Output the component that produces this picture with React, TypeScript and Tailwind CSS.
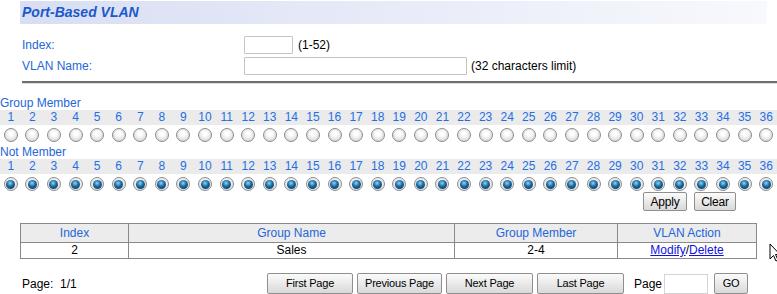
import React from 'react';

const ports = Array.from({ length: 36 }, (_, i) => i + 1);

const Radio = ({ checked }: { checked: boolean }) =>
  checked ? (
    <span className="w-[14px] h-[14px] rounded-full border border-[#8c8c8c] bg-[radial-gradient(circle_at_50%_40%,#ffffff,#d6d6d6)] flex items-center justify-center">
      <span className="w-[9px] h-[9px] rounded-full bg-[radial-gradient(circle_at_45%_35%,#8fd4f5,#16679e_45%,#082e52)]" />
    </span>
  ) : (
    <span className="w-[14px] h-[14px] rounded-full border border-[#8c8c8c] bg-[radial-gradient(circle_at_50%_40%,#ffffff_20%,#c9c9c9)]" />
  );

const PortGrid = ({ checked }: { checked: boolean }) => (
  <>
    <div className="grid grid-cols-36 h-[15px] bg-[#ebebeb] text-[#1f6fe5] leading-[15px]">
      {ports.map((p) => (
        <span key={p} className="text-center">{p}</span>
      ))}
    </div>
    <div className="grid grid-cols-36 h-[20px] items-center">
      {ports.map((p) => (
        <span key={p} className="flex justify-center">
          <Radio checked={checked} />
        </span>
      ))}
    </div>
  </>
);

const Btn = ({ children, w }: { children: React.ReactNode; w: string }) => (
  <button
    className={`${w} h-[21px] rounded-[2px] border border-[#8f8f8f] bg-gradient-to-b from-[#fbfbfb] to-[#d9d9d9] text-[11px] tracking-[-0.2px] text-black leading-none`}
  >
    {children}
  </button>
);

export default function App() {
  return (
    <div className="relative w-[777px] h-[294px] overflow-hidden bg-white font-['Liberation_Sans',Arial,sans-serif] text-[12px]">
      {/* Title bar */}
      <div className="mt-[1px] ml-[20px] w-[747px] h-[23px] bg-gradient-to-r from-[#d8def3] to-[#f8f9fd] pl-[2px] leading-[23px]">
        <span className="text-[14px] font-bold italic text-[#1b58cc]">Port-Based VLAN</span>
      </div>

      {/* Form */}
      <div className="mt-[12px] ml-[22px] flex flex-col gap-[3px] text-[#2566d8]">
        <div className="flex items-center h-[18px]">
          <span className="w-[222px]">Index:</span>
          <input className="w-[49px] h-[18px] border border-[#c4c4c4] rounded-[1px]" />
          <span className="ml-[5px] text-black">(1-52)</span>
        </div>
        <div className="flex items-center h-[18px]">
          <span className="w-[222px]">VLAN Name:</span>
          <input className="w-[223px] h-[18px] border border-[#c4c4c4] rounded-[1px]" />
          <span className="ml-[4px] text-black">(32 characters limit)</span>
        </div>
      </div>

      <div className="mt-[6px] ml-[22px] border-t-[2px] border-t-[#6f6f6f] border-b border-b-[#e0e0e0]" />

      {/* Ports */}
      <div className="mt-[12px] text-[#2566d8] leading-[14px] h-[14px]">Group Member</div>
      <PortGrid checked={false} />
      <div className="text-[#2566d8] leading-[14px] h-[14px]">Not Member</div>
      <PortGrid checked={true} />

      <div className="flex gap-[7px] ml-[643px] mt-[-2px]">
        <Btn w="w-[44px] !h-[19px] !text-[12px]">Apply</Btn>
        <Btn w="w-[42px] !h-[19px] !text-[12px]">Clear</Btn>
      </div>

      {/* Table */}
      <table className="mt-[12px] ml-[20px] w-[737px] border-collapse border border-[#8a8a8a] table-fixed">
        <thead>
          <tr className="h-[18px] bg-[#ececec] text-[#2566d8]">
            <th className="w-[108px] border border-[#8a8a8a] font-normal p-0">Index</th>
            <th className="w-[326px] border border-[#8a8a8a] font-normal p-0">Group Name</th>
            <th className="w-[163px] border border-[#8a8a8a] font-normal p-0">Group Member</th>
            <th className="border border-[#8a8a8a] font-normal p-0">VLAN Action</th>
          </tr>
        </thead>
        <tbody>
          <tr className="h-[16px] text-center text-black leading-[15px]">
            <td className="border border-[#8a8a8a] p-0">2</td>
            <td className="border border-[#8a8a8a] p-0">Sales</td>
            <td className="border border-[#8a8a8a] p-0">2-4</td>
            <td className="border border-[#8a8a8a] p-0">
              <a className="text-[#1111dd] underline">Modify</a>/<a className="text-[#1111dd] underline">Delete</a>
            </td>
          </tr>
        </tbody>
      </table>

      {/* Paging */}
      <div className="mt-[14px] flex items-center h-[21px]">
        <span className="ml-[22px] w-[245px] text-black">Page:&nbsp;&nbsp;1/1</span>
        <div className="flex gap-[4px]">
          <Btn w="w-[86px]">First Page</Btn>
          <Btn w="w-[85px]">Previous Page</Btn>
          <Btn w="w-[87px]">Next Page</Btn>
          <Btn w="w-[87px]">Last Page</Btn>
        </div>
        <span className="ml-[10px] text-black">Page</span>
        <input className="ml-[2px] w-[44px] h-[20px] border border-[#d4d4d4]" />
        <span className="ml-[6px]">
          <Btn w="w-[34px]">GO</Btn>
        </span>
      </div>

      {/* Mouse pointer */}
      <svg className="absolute left-[769px] top-[243px]" width="12" height="19" viewBox="0 0 12 19">
        <path d="M1 1 L1 16 L4.5 12.5 L7 18 L9 17 L6.5 11.5 L11 11.5 Z" fill="#fff" stroke="#000" strokeWidth="1" />
      </svg>
    </div>
  );
}
